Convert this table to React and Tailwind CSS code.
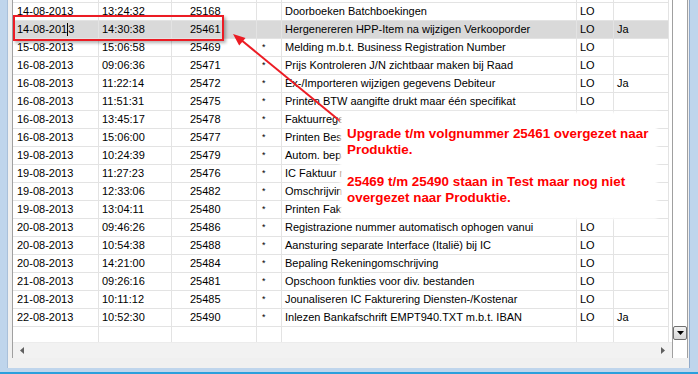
import React from 'react';

const rows = [
  ['14-08-2013', '13:24:32', '25168', '', 'Doorboeken Batchboekingen', 'LO', ''],
  ['14-08-2013', '14:30:38', '25461', '', 'Hergenereren HPP-Item na wijzigen Verkooporder', 'LO', 'Ja'],
  ['15-08-2013', '15:06:58', '25469', '*', 'Melding m.b.t. Business Registration Number', 'LO', ''],
  ['16-08-2013', '09:06:36', '25471', '*', 'Prijs Kontroleren J/N zichtbaar maken bij Raad', 'LO', ''],
  ['16-08-2013', '11:22:14', '25472', '*', 'Ex-/Importeren wijzigen gegevens Debiteur', 'LO', 'Ja'],
  ['16-08-2013', '11:51:31', '25475', '*', 'Printen BTW aangifte drukt maar één specifikat', 'LO', ''],
  ['16-08-2013', '13:45:17', '25478', '*', 'Faktuurregels drukken op BTW Kodeblad', 'LO', ''],
  ['16-08-2013', '15:06:00', '25477', '*', 'Printen Bestelbon met leverdatum', 'LO', ''],
  ['19-08-2013', '10:24:39', '25479', '*', 'Autom. bepalen grootboekrekening', 'LO', ''],
  ['19-08-2013', '11:27:23', '25476', '*', 'IC Faktuur met BTW', 'LO', ''],
  ['19-08-2013', '12:33:06', '25482', '*', 'Omschrijving artikel wijzigen', 'LO', ''],
  ['19-08-2013', '13:04:11', '25480', '*', 'Printen Faktuur kopie', 'LO', ''],
  ['20-08-2013', '09:46:26', '25486', '*', 'Registrazione nummer automatisch ophogen vanui', 'LO', ''],
  ['20-08-2013', '10:54:38', '25488', '*', 'Aansturing separate Interface (Italië) bij IC', 'LO', ''],
  ['20-08-2013', '14:21:00', '25484', '*', 'Bepaling Rekeningomschrijving', 'LO', ''],
  ['21-08-2013', '09:26:16', '25481', '*', 'Opschoon funkties voor div. bestanden', 'LO', ''],
  ['21-08-2013', '10:11:12', '25485', '*', 'Jounaliseren IC Fakturering Diensten-/Kostenar', 'LO', ''],
  ['22-08-2013', '10:52:30', '25490', '*', 'Inlezen Bankafschrift EMPT940.TXT m.b.t. IBAN', 'LO', 'Ja'],
];

// widths include the right grid line
const cols = [
  'w-[86px] pl-[4px]',
  'w-[73px] pl-[3px]',
  'w-[85px] pl-[18px]',
  'w-[25px] pl-[5px] text-[9px]',
  'w-[295px] pl-[3px]',
  'w-[37px] pl-[3px]',
  'w-[55px] pl-[3px]',
];

function Row({ cells, selected, h = 'h-[18px]', last = false }) {
  return (
    <div className={`flex shrink-0 ${h}`}>
      {cols.map((c, i) => (
        <div
          key={i}
          className={`${c} shrink-0 border-r border-[#e3e3e3] ${last ? '' : 'border-b'} overflow-hidden whitespace-nowrap leading-[17px] ${
            selected ? 'bg-[#d9d9d9]' : ''
          }`}
        >
          {selected && i === 0 ? (
            <>
              {cells[0].slice(0, 9)}
              <span className="inline-block w-px h-[13px] bg-black align-[-3px]" />
              {cells[0].slice(9)}
            </>
          ) : cells ? (
            cells[i]
          ) : (
            ''
          )}
        </div>
      ))}
    </div>
  );
}

export default function App() {
  return (
    <div className="relative w-[698px] h-[374px] flex flex-col bg-[#f0f0f0] overflow-hidden font-['Liberation_Sans',Arial,sans-serif] text-[11px] text-black">
      <div className="flex h-[368px]">
        {/* left window frame */}
        <div className="w-[8px] shrink-0 bg-[#bfd5ec] border-r border-[#a9c0da]" />
        <div className="w-[4px] shrink-0" />

        {/* list control */}
        <div className="flex flex-col w-[677px] shrink-0">
          <div className="flex h-[358px] border-l border-[#a0a0a0]">
            <div className="w-[659px] shrink-0 flex flex-col bg-white">
              <div className="flex flex-col h-[342px] overflow-hidden">
                <Row h="h-[3px]" />
                {rows.map((r, i) => (
                  <Row key={i} cells={r} selected={i === 1} />
                ))}
                <Row h="h-[15px]" last />
              </div>
              {/* horizontal scrollbar */}
              <div className="h-[16px] flex items-center justify-between px-[7px] bg-[#f2f2f2] border-t border-[#ececec]">
                <svg width="4" height="7" viewBox="0 0 4 7">
                  <path d="M4 0 L0 3.5 L4 7 Z" fill="#606060" />
                </svg>
                <svg width="4" height="7" viewBox="0 0 4 7">
                  <path d="M0 0 L4 3.5 L0 7 Z" fill="#606060" />
                </svg>
              </div>
            </div>
            {/* vertical scrollbar */}
            <div className="w-[15px] shrink-0 flex flex-col bg-white border-l border-[#a0a0a0]">
              <div className="h-[326px]" />
              <div className="h-[14px] rounded-[2px] border border-[#707070] bg-gradient-to-b from-[#f4f4f4] to-[#d6d6d6] flex items-center justify-center">
                <svg width="7" height="4" viewBox="0 0 7 4">
                  <path d="M0 0 L7 0 L3.5 4 Z" fill="#000" />
                </svg>
              </div>
            </div>
            <div className="w-px shrink-0 bg-[#a0a0a0]" />
          </div>
          <div className="flex-1" />
        </div>

        {/* right window frame */}
        <div className="w-[9px] shrink-0 bg-[#bfd5ec] border-l border-[#90aacb]" />
      </div>
      <div className="h-[4px] bg-[#bfd5ec]" />
      <div className="h-[2px] bg-[#2b9fdc]" />

      {/* red highlight rectangle */}
      <div className="absolute left-[13px] top-[15px] w-[211px] h-[26px] border-2 border-[#ec1c24] shadow-[2px_2px_3px_rgba(0,0,0,0.3)]" />

      {/* arrow */}
      <svg className="absolute left-0 top-0 pointer-events-none" width="698" height="374">
        <line x1="340" y1="121" x2="240" y2="39" stroke="#ec1c24" strokeWidth="2" />
        <polygon points="233,34 245.5,38 239.2,45.6" fill="#ec1c24" />
      </svg>

      {/* callout */}
      <div className="absolute left-[342px] top-[114px] w-[313px] h-[103px] bg-white shadow-[0_0_3px_2px_#ffffff] pl-[5px] pt-[12px] font-bold text-[13.4px] leading-[16px] text-[#ff0000] whitespace-nowrap">
        <div>Upgrade t/m volgnummer 25461 overgezet naar</div>
        <div>Produktie.</div>
        <div className="h-[16px]" />
        <div>25469 t/m 25490 staan in Test maar nog niet</div>
        <div>overgezet naar Produktie.</div>
      </div>
    </div>
  );
}
